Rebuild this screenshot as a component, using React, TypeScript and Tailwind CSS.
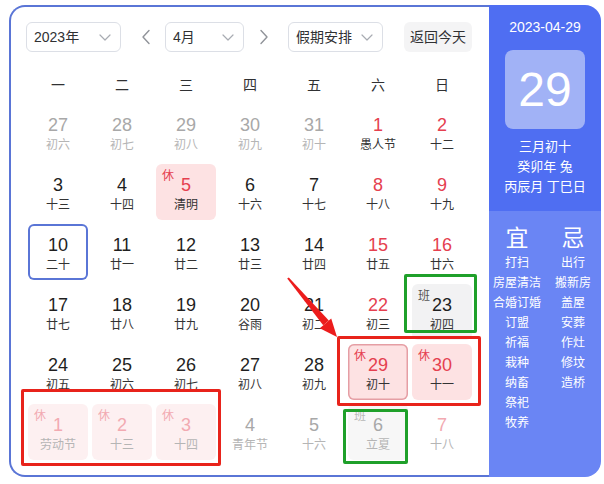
import React from 'react';

type Cell = {
  d: number;
  l: string;
  other?: boolean;
  red?: boolean;
  tag?: '休' | '班';
  sel?: boolean;
  today?: boolean;
};

const weeks: Cell[][] = [
  [
    { d: 27, l: '初六', other: true },
    { d: 28, l: '初七', other: true },
    { d: 29, l: '初八', other: true },
    { d: 30, l: '初九', other: true },
    { d: 31, l: '初十', other: true },
    { d: 1, l: '愚人节', red: true },
    { d: 2, l: '十二', red: true },
  ],
  [
    { d: 3, l: '十三' },
    { d: 4, l: '十四' },
    { d: 5, l: '清明', red: true, tag: '休' },
    { d: 6, l: '十六' },
    { d: 7, l: '十七' },
    { d: 8, l: '十八', red: true },
    { d: 9, l: '十九', red: true },
  ],
  [
    { d: 10, l: '二十', today: true },
    { d: 11, l: '廿一' },
    { d: 12, l: '廿二' },
    { d: 13, l: '廿三' },
    { d: 14, l: '廿四' },
    { d: 15, l: '廿五', red: true },
    { d: 16, l: '廿六', red: true },
  ],
  [
    { d: 17, l: '廿七' },
    { d: 18, l: '廿八' },
    { d: 19, l: '廿九' },
    { d: 20, l: '谷雨' },
    { d: 21, l: '初二' },
    { d: 22, l: '初三', red: true },
    { d: 23, l: '初四', tag: '班' },
  ],
  [
    { d: 24, l: '初五' },
    { d: 25, l: '初六' },
    { d: 26, l: '初七' },
    { d: 27, l: '初八' },
    { d: 28, l: '初九' },
    { d: 29, l: '初十', red: true, tag: '休', sel: true },
    { d: 30, l: '十一', red: true, tag: '休' },
  ],
  [
    { d: 1, l: '劳动节', other: true, red: true, tag: '休' },
    { d: 2, l: '十三', other: true, red: true, tag: '休' },
    { d: 3, l: '十四', other: true, red: true, tag: '休' },
    { d: 4, l: '青年节', other: true },
    { d: 5, l: '十六', other: true },
    { d: 6, l: '立夏', other: true, tag: '班' },
    { d: 7, l: '十八', other: true, red: true },
  ],
];

const good = ['打扫', '房屋清洁', '合婚订婚', '订盟', '祈福', '栽种', '纳畜', '祭祀', '牧养'];
const bad = ['出行', '搬新房', '盖屋', '安葬', '作灶', '修坟', '造桥'];

function ChevronDown() {
  return (
    <svg width="12" height="7" viewBox="0 0 12 7" fill="none">
      <path d="M1 1l5 5 5-5" stroke="#a8abb2" strokeWidth="1.2" strokeLinecap="round" strokeLinejoin="round" />
    </svg>
  );
}

function Select({ label, width }: { label: string; width: string }) {
  return (
    <div className={`${width} h-[30px] rounded-[6px] border border-[#dcdfe6] flex items-center justify-between pl-[7px] pr-[9px] text-[14px] text-[#303133]`}>
      <span>{label}</span>
      <ChevronDown />
    </div>
  );
}

function DayCell({ c }: { c: Cell }) {
  let bg = '';
  if (c.tag === '休') bg = c.other ? 'bg-[#fdf0f1]' : 'bg-[#fde2e3]';
  if (c.tag === '班') bg = c.other ? 'bg-[#f7f7f7]' : 'bg-[#f2f2f3]';

  let ring = '';
  if (c.sel) ring = 'shadow-[inset_0_0_0_1.5px_#e59ea4]';
  if (c.today) ring = 'shadow-[inset_0_0_0_2px_#5a75d6]';

  let num = 'text-[#1f1f1f]';
  if (c.other) num = c.red ? 'text-[#f2aab1]' : 'text-[#a8a8a8]';
  else if (c.red) num = 'text-[#e5404f]';

  const lunar = c.other ? 'text-[#b5b5b5]' : 'text-[#333]';

  let tagColor = '';
  if (c.tag === '休') tagColor = c.other ? 'text-[#f2aab1]' : 'text-[#e5404f]';
  if (c.tag === '班') tagColor = c.other ? 'text-[#b8b8b8]' : 'text-[#555]';

  return (
    <div className={`relative mx-[2px] mt-[2px] h-[56px] rounded-[6px] flex flex-col items-center pt-[10px] ${bg} ${ring}`}>
      {c.tag && (
        <span className={`absolute left-[6px] top-[4px] text-[12px] leading-[16px] ${tagColor}`}>{c.tag}</span>
      )}
      <span className={`text-[18px] leading-[22px] ${num}`}>{c.d}</span>
      <span className={`text-[12px] leading-[16px] mt-[1px] ${lunar}`}>{c.l}</span>
    </div>
  );
}

export default function App() {
  return (
    <div className="relative w-[604px] h-[484px] bg-white font-['Liberation_Sans','Noto_Sans_CJK_SC',sans-serif] overflow-hidden">
      <div className="ml-[9px] mt-[5px] w-[592px] h-[472px] flex">
        {/* calendar */}
        <div className="w-[480px] h-full border-2 border-r-0 border-[#5a75d6] rounded-l-[16px] pl-[15px] pt-[15px]">
          <div className="flex items-center h-[30px]">
            <Select label="2023年" width="w-[95px]" />
            <svg className="ml-[20px] mr-[14px]" width="10" height="16" viewBox="0 0 10 16" fill="none">
              <path d="M8 1.5L2 8l6 6.5" stroke="#909399" strokeWidth="1.4" strokeLinecap="round" strokeLinejoin="round" />
            </svg>
            <Select label="4月" width="w-[79px]" />
            <svg className="ml-[15px] mr-[19px]" width="10" height="16" viewBox="0 0 10 16" fill="none">
              <path d="M2 1.5L8 8l-6 6.5" stroke="#909399" strokeWidth="1.4" strokeLinecap="round" strokeLinejoin="round" />
            </svg>
            <Select label="假期安排" width="w-[95px]" />
            <div className="ml-[21px] w-[68px] h-[30px] rounded-[6px] bg-[#f4f4f5] flex items-center justify-center text-[14px] text-[#303133]">
              返回今天
            </div>
          </div>

          <div className="grid grid-cols-7 w-[448px] h-[30px] mt-[18px] mb-[2px] text-[14px] text-[#303133]">
            {['一', '二', '三', '四', '五', '六', '日'].map((w) => (
              <div key={w} className="flex items-center justify-center">{w}</div>
            ))}
          </div>

          <div className="w-[448px]">
            {weeks.map((row, i) => (
              <div key={i} className="grid grid-cols-7 h-[60px]">
                {row.map((c, j) => (
                  <DayCell key={j} c={c} />
                ))}
              </div>
            ))}
          </div>
        </div>

        {/* side panel */}
        <div className="w-[112px] h-full rounded-r-[16px] overflow-hidden flex flex-col text-white">
          <div className="bg-[#4f6ef2] h-[206px] flex flex-col items-center pt-[12px]">
            <div className="text-[14px] leading-[20px]">2023-04-29</div>
            <div className="mt-[13px] w-[80px] h-[79px] rounded-[8px] bg-[#a1b2f6] flex items-center justify-center text-[48px] leading-none">
              29
            </div>
            <div className="mt-[8px] text-[13px] leading-[20px] text-center">
              <div>三月初十</div>
              <div>癸卯年 兔</div>
              <div>丙辰月 丁巳日</div>
            </div>
          </div>
          <div className="flex-1 bg-[#6a85f4] flex pt-[12px]">
            <div className="w-[56px] flex flex-col items-center">
              <div className="text-[23px] leading-[30px]">宜</div>
              {good.map((g) => (
                <div key={g} className="text-[12px] leading-[20px] whitespace-nowrap">{g}</div>
              ))}
            </div>
            <div className="w-[56px] flex flex-col items-center">
              <div className="text-[23px] leading-[30px]">忌</div>
              {bad.map((g) => (
                <div key={g} className="text-[12px] leading-[20px] whitespace-nowrap">{g}</div>
              ))}
            </div>
          </div>
        </div>
      </div>

      {/* annotations */}
      <div className="absolute left-[337px] top-[336px] w-[144px] h-[70px] border-[3px] border-[#e8231b] rounded-[2px]" />
      <div className="absolute left-[21px] top-[389px] w-[200px] h-[77px] border-[3px] border-[#e8231b] rounded-[2px]" />
      <div className="absolute left-[404px] top-[274px] w-[73px] h-[59px] border-[3px] border-[#1fa02a] rounded-[2px]" />
      <div className="absolute left-[343px] top-[409px] w-[65px] h-[55px] border-[3px] border-[#1fa02a] rounded-[2px]" />
      <svg className="absolute left-0 top-0 pointer-events-none" width="604" height="484" viewBox="0 0 604 484">
        <polygon points="287.2,278.6 288.8,277.4 328.8,320.6 323.2,325.2" fill="#ec1c1c" />
        <polygon points="337,337 319.8,328.2 331.2,318.6" fill="#ec1c1c" />
      </svg>
    </div>
  );
}
